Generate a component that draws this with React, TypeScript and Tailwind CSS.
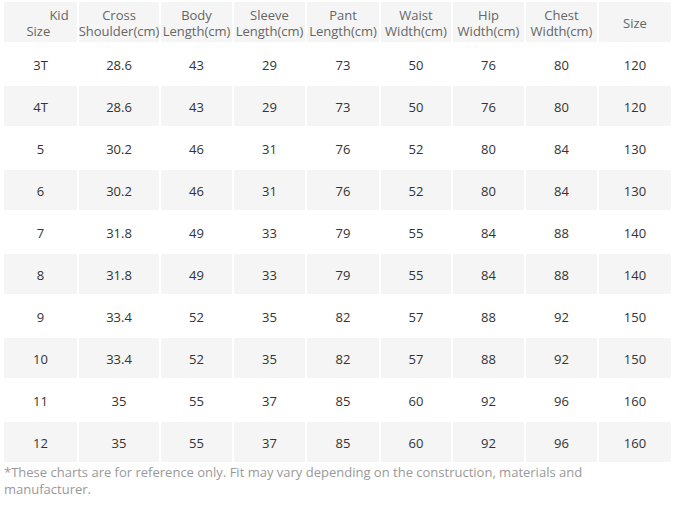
import React from "react";

const headers: React.ReactNode[] = [
  <div className="w-full text-left pl-[14px]">
    <span className="pl-[23px]">Kid</span>
    <br />
    Size
  </div>,
  <>Cross<br />Shoulder(cm)</>,
  <>Body<br />Length(cm)</>,
  <>Sleeve<br />Length(cm)</>,
  <>Pant<br />Length(cm)</>,
  <>Waist<br />Width(cm)</>,
  <>Hip<br />Width(cm)</>,
  <>Chest<br />Width(cm)</>,
  <>Size</>,
];

const rows: string[][] = [
  ["3T", "28.6", "43", "29", "73", "50", "76", "80", "120"],
  ["4T", "28.6", "43", "29", "73", "50", "76", "80", "120"],
  ["5", "30.2", "46", "31", "76", "52", "80", "84", "130"],
  ["6", "30.2", "46", "31", "76", "52", "80", "84", "130"],
  ["7", "31.8", "49", "33", "79", "55", "84", "88", "140"],
  ["8", "31.8", "49", "33", "79", "55", "84", "88", "140"],
  ["9", "33.4", "52", "35", "82", "57", "88", "92", "150"],
  ["10", "33.4", "52", "35", "82", "57", "88", "92", "150"],
  ["11", "35", "55", "37", "85", "60", "92", "96", "160"],
  ["12", "35", "55", "37", "85", "60", "92", "96", "160"],
];

export default function App() {
  return (
    <div className="w-[678px] h-[506px] bg-white pl-[4px] pt-[2px] font-['Open_Sans',sans-serif] text-[13px]">
      <div className="grid grid-cols-[73px_80px_71px_71px_72px_70px_71px_71px_72px] gap-[2px] w-fit">
        {headers.map((h, i) => (
          <div
            key={"h" + i}
            className="h-[40px] bg-[#f5f5f5] flex items-center justify-center text-center leading-[16px] text-[#666] pt-[1px]"
          >
            <div>{h}</div>
          </div>
        ))}
        {rows.map((r, ri) =>
          r.map((c, ci) => (
            <div
              key={ri + "-" + ci}
              className={
                "h-[40px] flex items-center justify-center text-[#333] pt-[4px] " +
                (ri % 2 === 1 ? "bg-[#f5f5f5]" : "bg-white")
              }
            >
              {c}
            </div>
          ))
        )}
      </div>
      <p className="w-[600px] mt-[2px] leading-[17px] text-[#999]">
        *These charts are for reference only. Fit may vary depending on the construction, materials and manufacturer.
      </p>
    </div>
  );
}
